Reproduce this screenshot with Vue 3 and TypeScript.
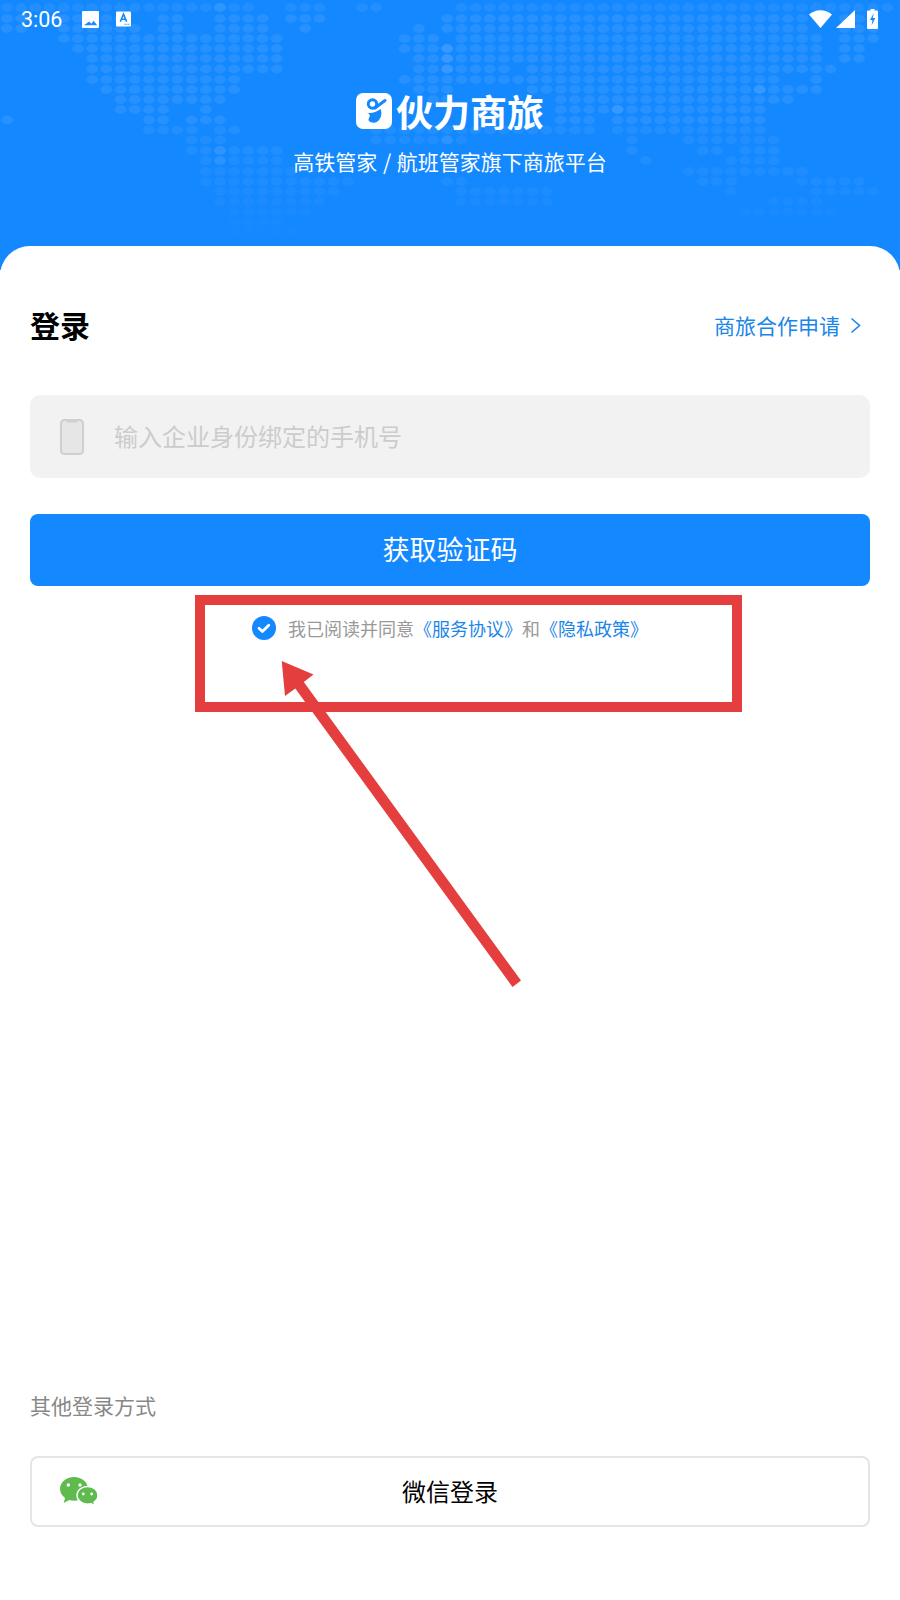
<script setup lang="ts">
type Row = [number, [number, number][], number?]

// Each row: y position, x ranges of the dots, optional opacity
const rows: Row[] = [
  [7.5, [[7, 213], [220, 253], [290, 323], [363, 383], [460, 890]], 0.75],
  [18.5, [[7, 17], [60, 117], [163, 183], [220, 257], [293, 313], [450, 470], [493, 803], [850, 870]]],
  [28.5, [[7, 17], [67, 133], [163, 183], [220, 257], [307, 310], [417, 420], [450, 470], [493, 803], [850, 870]]],
  [38.5, [[63, 270], [403, 427], [460, 817], [850, 870]]],
  [48.5, [[77, 283], [403, 450], [450, 817], [850, 860]]],
  [58.5, [[90, 283], [417, 450], [450, 817], [850, 860]]],
  [69, [[90, 270], [417, 450], [450, 500], [530, 827]]],
  [79.5, [[90, 240], [403, 450], [460, 513], [530, 777], [810, 813]]],
  [89.5, [[103, 230], [420, 450], [533, 757], [763, 813]]],
  [99.5, [[120, 213], [430, 450], [560, 757], [778, 782]]],
  [109.5, [[120, 170], [208, 212], [560, 613], [620, 753]]],
  [120, [[7, 12], [147, 170], [193, 213], [563, 583], [620, 753]]],
  [130, [[147, 197], [220, 240], [383, 583], [620, 753]], 0.8],
  [140, [[190, 213], [373, 450], [450, 460], [633, 636], [687, 727], [750, 770]], 0.7],
  [150.5, [[190, 213], [220, 277], [633, 636], [707, 710], [750, 770]], 0.75],
  [160.5, [[203, 213], [220, 283], [650, 653], [733, 736], [750, 770]], 0.65],
  [171.5, [[203, 206], [220, 290], [690, 797]], 0.6],
  [181.5, [[203, 343], [450, 460], [707, 727], [807, 853]], 0.55],
  [191.5, [[220, 340], [460, 540], [733, 736], [810, 867]], 0.5],
  [201.5, [[220, 323], [460, 550], [767, 817]], 0.4],
  [211.5, [[233, 300], [750, 827]], 0.3],
  [221.5, [[233, 283]], 0.25],
  [231.5, [[233, 297]], 0.2],
]

const dots = rows.flatMap(([y, ranges, opacity]) =>
  ranges.flatMap(([from, to]) => {
    const out: { x: number; y: number; o: number }[] = []
    const first = Math.round((from - 7) / 14.2)
    const last = Math.round((to - 7) / 14.2)
    for (let i = first; i <= last; i++) {
      out.push({ x: 7 + i * 14.2, y, o: opacity ?? 1 })
    }
    return out
  }),
)
</script>

<template>
  <div class="page">
    <header class="hero">
      <svg class="map" width="900" height="246" viewBox="0 0 900 246" aria-hidden="true">
        <ellipse
          v-for="(d, i) in dots"
          :key="i"
          :cx="d.x"
          :cy="d.y"
          rx="6"
          ry="4.4"
          fill="#ffffff"
          :fill-opacity="0.08 * d.o"
        />
      </svg>

      <div class="status">
        <div class="status-left">
          <span class="time">3:06</span>
          <svg width="17" height="17" viewBox="0 0 18 18">
            <path fill="#fff" fill-rule="evenodd" d="M1 0h16a1 1 0 0 1 1 1v16a1 1 0 0 1-1 1H1a1 1 0 0 1-1-1V1a1 1 0 0 1 1-1zM2 15h14l-3.600-4.600-2.700 3-2-2.200z" />
          </svg>
          <svg class="ic-a" width="15" height="16" viewBox="0 0 16 16">
            <path fill="#fff" d="M1 0h14a1 1 0 0 1 1 1v14a1 1 0 0 1-1 1H1a1 1 0 0 1-1-1V1a1 1 0 0 1 1-1z" />
            <path fill="none" stroke="#1488ff" stroke-width="1.700" d="M4.600 11 8 2.800 11.400 11M5.800 8.300h4.400" />
            <path fill="#1488ff" d="M9 13h1.200v1.200H9zM11 13h1.200v1.200H11zM13 13h1.200v1.200H13z" />
          </svg>
        </div>
        <div class="status-right">
          <svg width="23" height="18" viewBox="0 0 23 18">
            <path fill="#fff" d="M0 4.600C3 1.800 7 .2 11.500.2S20 1.800 23 4.600L11.500 18z" />
          </svg>
          <svg width="19" height="18" viewBox="0 0 19 18">
            <path fill="#fff" d="M19 0v18H0z" />
          </svg>
          <svg class="ic-batt" width="11" height="20" viewBox="0 0 11 20">
            <path fill="#fff" d="M3.500 0h4v1.600H10a1 1 0 0 1 1 1V19a1 1 0 0 1-1 1H1a1 1 0 0 1-1-1V2.600a1 1 0 0 1 1-1h2.500z" />
            <path fill="#1488ff" d="M6.800 4 3 11h2.400l-.8 5.500L8.300 9H5.700z" />
          </svg>
        </div>
      </div>

      <div class="brand">
        <svg width="36" height="36" viewBox="0 0 36 36">
          <rect width="36" height="36" rx="7" fill="#fff" />
          <circle cx="16.500" cy="11" r="4.200" fill="none" stroke="#1488ff" stroke-width="3" />
          <path fill="none" stroke="#1488ff" stroke-width="3" stroke-linecap="round" d="M19 15 29 7.500" />
          <path fill="#1488ff" d="M11 19.500c3.500 1.500 8.500.2 13.500-3.500 2 4.200.5 10-3 12.500-2.500 1.700-6.500 1.700-8.500-.4-1.200-1.500 0-3 .5-4.100.8-1.500.2-3.300-2.500-4.500z" />
        </svg>
        <span class="brand-name">伙力商旅</span>
      </div>
      <p class="tagline">高铁管家 / 航班管家旗下商旅平台</p>
    </header>

    <main class="sheet">
      <div class="title-row">
        <h1 class="title">登录</h1>
        <a class="apply">
          商旅合作申请
          <svg width="11" height="17" viewBox="0 0 11 17">
            <path fill="none" stroke="#1a86e8" stroke-width="1.600" d="M1.500 1.500l8 7-8 7" />
          </svg>
        </a>
      </div>

      <div class="phone-field">
        <svg width="24" height="36" viewBox="0 0 24 36">
          <rect x="1" y="1" width="22" height="34" rx="3.500" fill="#e6e6e6" stroke="#cfcfcf" stroke-width="2" />
          <path stroke="#cfcfcf" stroke-width="2" d="M7 2.500h10" />
        </svg>
        <span class="placeholder">输入企业身份绑定的手机号</span>
      </div>

      <button class="primary" type="button">获取验证码</button>

      <div class="agree">
        <svg width="24" height="24" viewBox="0 0 24 24">
          <circle cx="12" cy="12" r="12" fill="#1488ff" />
          <path fill="none" stroke="#fff" stroke-width="2.800" stroke-linecap="round" stroke-linejoin="round" d="M7 12.300l3.400 3.200 6.400-6.300" />
        </svg>
        <span class="agree-text">我已阅读并同意<em>《服务协议》</em>和<em>《隐私政策》</em></span>
      </div>

      <div class="other">
        <p class="other-label">其他登录方式</p>
        <button class="wechat" type="button">
          <svg class="wechat-icon" width="40" height="32" viewBox="0 0 40 32">
            <path fill="#5fbb4e" d="M14 0C6.300 0 0 5.200 0 11.800c0 3.700 2 7 5 9.200l-1.200 5 5.400-3c1.600.5 3.200.8 4.800.8 7.700 0 14-5.300 14-12S21.700 0 14 0z" />
            <path fill="#5fbb4e" stroke="#fff" stroke-width="1.400" d="M27.500 9.500c-5.800 0-10.500 3.900-10.500 8.800s4.700 8.800 10.500 8.800c1.200 0 2.400-.2 3.500-.5l4 2.400-1-3.800c2.500-1.600 4-4.100 4-6.900 0-4.900-4.700-8.800-10.500-8.800z" />
            <circle cx="8.300" cy="8" r="1.700" fill="#fff" />
            <circle cx="20" cy="8" r="1.700" fill="#fff" />
            <circle cx="23.300" cy="17" r="1.400" fill="#fff" />
            <circle cx="31.700" cy="17" r="1.400" fill="#fff" />
          </svg>
          微信登录
        </button>
      </div>
    </main>

    <div class="mark-box"></div>
    <svg class="mark-arrow" width="900" height="1600" viewBox="0 0 900 1600" aria-hidden="true">
      <path fill="#e53e3e" d="M281.700 661 313.500 674.500 303.800 682 521 980.500 512.500 987 295.300 688.500 285 696z" />
    </svg>
  </div>
</template>

<style>
html,
body {
  margin: 0;
  background: #fff;
}
</style>

<style scoped>
.page {
  position: relative;
  width: 900px;
  height: 1600px;
  display: flex;
  flex-direction: column;
  overflow: hidden;
  background: #fff;
  font-family: "Noto Sans CJK SC", "Noto Sans", sans-serif;
}

.hero {
  position: relative;
  height: 270px;
  flex: none;
  display: flex;
  flex-direction: column;
  align-items: center;
  background: #1488ff;
  color: #fff;
}

.map {
  position: absolute;
  left: 0;
  top: 0;
}

.status {
  position: relative;
  width: 100%;
  height: 38px;
  box-sizing: border-box;
  padding: 0 22px 0 21px;
  display: flex;
  justify-content: space-between;
  align-items: center;
}

.status-left,
.status-right {
  display: flex;
  align-items: center;
}

.time {
  font-family: Roboto, sans-serif;
  font-size: 21.500px;
  width: 61px;
}

.ic-a {
  margin-left: 17px;
}

.status-right {
  gap: 4px;
}

.ic-batt {
  margin-left: 8px;
}

.brand {
  position: relative;
  margin-top: 55px;
  display: flex;
  align-items: center;
  gap: 4px;
  height: 36px;
}

.brand-name {
  font-size: 37px;
  line-height: 36px;
  font-weight: 700;
}

.tagline {
  position: relative;
  margin: 17px 0 0;
  font-size: 21px;
  line-height: 30px;
  font-weight: 400;
  word-spacing: 1px;
}

.sheet {
  position: relative;
  margin-top: -24px;
  flex: 1;
  display: flex;
  flex-direction: column;
  padding: 0 30px;
  background: #fff;
  border-radius: 30px 30px 0 0;
}

.title-row {
  margin-top: 58px;
  height: 44px;
  display: flex;
  align-items: center;
  justify-content: space-between;
}

.title {
  margin: 0;
  padding-bottom: 4px;
  font-size: 30px;
  line-height: 44px;
  font-weight: 700;
  color: #000;
}

.apply {
  display: flex;
  align-items: center;
  gap: 10px;
  padding: 0 9px 2px 0;
  font-size: 21px;
  color: #1a86e8;
}

.phone-field {
  margin-top: 47px;
  height: 83px;
  box-sizing: border-box;
  padding-left: 30px;
  display: flex;
  align-items: center;
  gap: 30px;
  border-radius: 10px;
  background: #f2f2f2;
}

.placeholder {
  padding-bottom: 3px;
  font-size: 24px;
  color: #cccccc;
}

.primary {
  margin-top: 36px;
  height: 72px;
  border: 0;
  padding: 0 0 4px;
  border-radius: 8px;
  background: #1488ff;
  color: #fff;
  font-family: inherit;
  font-size: 27px;
}

.agree {
  margin: 30px 0 0 222px;
  display: flex;
  align-items: center;
  gap: 12px;
  height: 24px;
}

.agree-text {
  font-size: 18px;
  color: #999;
  white-space: nowrap;
}

.agree-text em {
  font-style: normal;
  color: #1a86e8;
}

.other {
  margin-top: auto;
  padding-bottom: 73px;
}

.other-label {
  margin: 0;
  font-size: 21px;
  line-height: 30px;
  color: #888;
}

.wechat {
  position: relative;
  margin-top: 36px;
  width: 100%;
  height: 71px;
  box-sizing: border-box;
  border: 2px solid #e5e5e5;
  border-radius: 8px;
  padding: 0 0 2px;
  background: #fff;
  color: #000;
  font-family: inherit;
  font-size: 24px;
}

.wechat-icon {
  position: absolute;
  left: 28px;
  top: 19px;
}

.mark-box {
  position: absolute;
  left: 195px;
  top: 595px;
  width: 547px;
  height: 117px;
  box-sizing: border-box;
  border: 10px solid #e53e3e;
  pointer-events: none;
}

.mark-arrow {
  position: absolute;
  left: 0;
  top: 0;
  pointer-events: none;
}
</style>
